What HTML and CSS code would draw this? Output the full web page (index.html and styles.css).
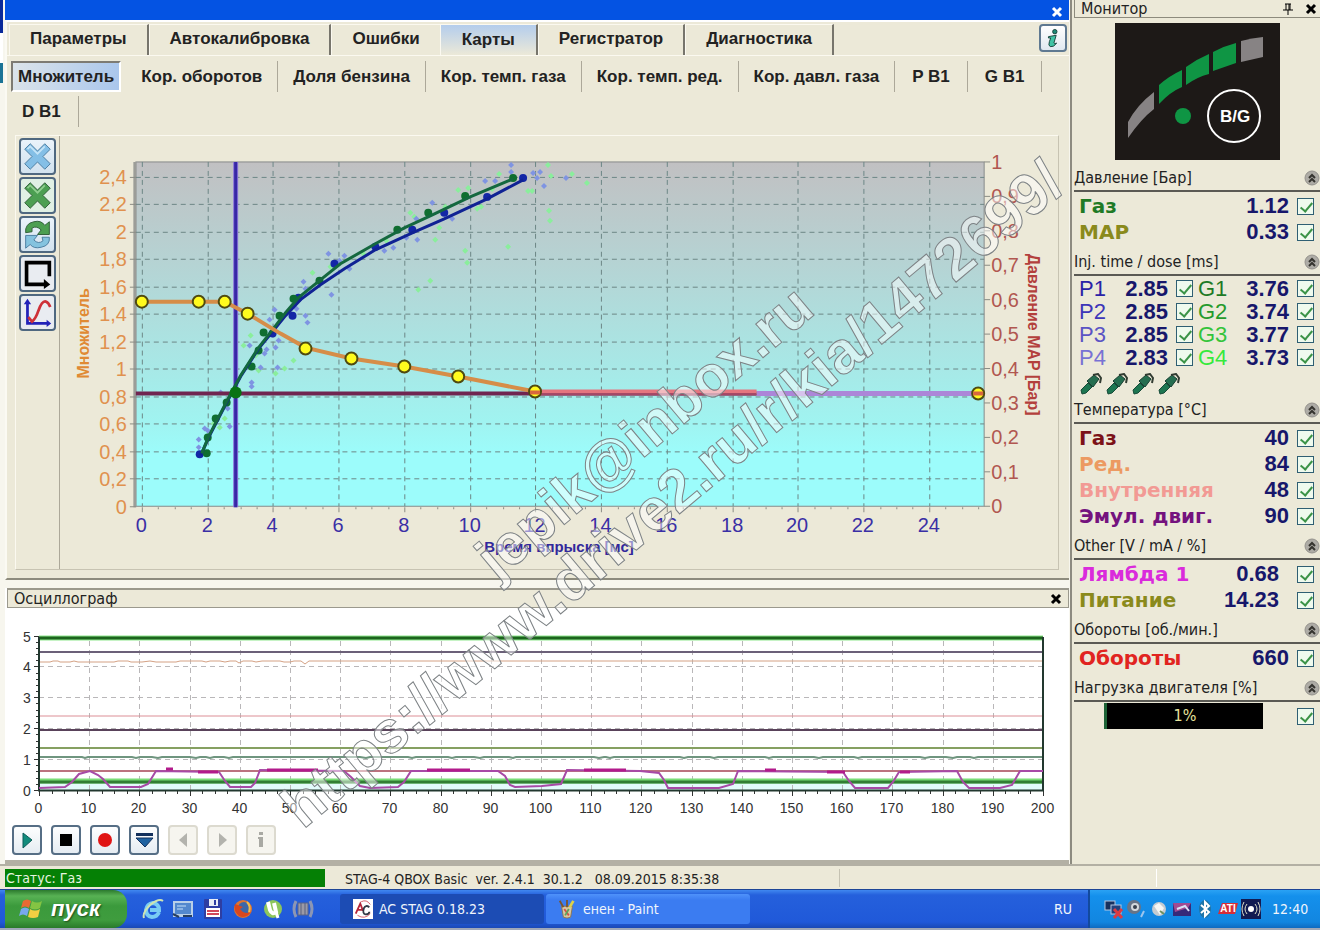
FILE: index.html
```html
<!DOCTYPE html>
<html lang="ru">
<head>
<meta charset="utf-8">
<title>AC STAG 0.18.23</title>
<link rel="stylesheet" href="styles.css">
</head>
<body>
<div class="screen">
  <div class="workspace">
    <main class="left">
      <div class="titlebar"><button class="close close-light" aria-label="Закрыть"><svg viewBox="0 0 12 12"><path d="M2 2L10 10M10 2L2 10"/></svg></button></div>
      <section class="page">
        <nav class="tabs">
          <button class="tab">Параметры</button>
          <button class="tab">Автокалибровка</button>
          <button class="tab tab-last">Ошибки</button>
          <button class="tab tab-active">Карты</button>
          <button class="tab">Регистратор</button>
          <button class="tab">Диагностика</button>
          <button class="info" aria-label="Информация"><svg viewBox="0 0 20 22"><circle cx="12" cy="4" r="2.4" fill="#1d8a76" stroke="#143c36"/><path d="M5 9.500L13.500 8L11 16.500Q11.500 18 14 16.500Q11 21.500 7 20.500Q4.500 19.500 6 15L7.500 11L5 11Z" fill="#3fc3a5" stroke="#143c36"/></svg></button>
        </nav>
        <nav class="subtabs">
          <button class="subtab subtab-active">Множитель</button>
          <button class="subtab">Кор. оборотов</button>
          <button class="subtab">Доля бензина</button>
          <button class="subtab">Кор. темп. газа</button>
          <button class="subtab">Кор. темп. ред.</button>
          <button class="subtab">Кор. давл. газа</button>
          <button class="subtab subtab-short">P B1</button>
          <button class="subtab subtab-short">G B1</button>
          <button class="subtab subtab-wrapped">D B1</button>
        </nav>
        <div class="map">
          <div class="tools">
            <button class="tool" aria-label="Очистить бензин"><svg viewBox="0 0 34 34"><path d="M3 9L9 3L17 11L25 3L31 9L23 17L31 25L25 31L17 23L9 31L3 25L11 17Z" fill="#84bfe6" stroke="#46799c"/><path d="M6 9L9 6L17 14L25 6" fill="none" stroke="#c4e4f7" stroke-width="2"/></svg></button>
            <button class="tool tool-green" aria-label="Очистить газ"><svg viewBox="0 0 34 34"><path d="M3 9L9 3L17 11L25 3L31 9L23 17L31 25L25 31L17 23L9 31L3 25L11 17Z" fill="#4c9f52" stroke="#2c5a35"/><path d="M6 9L9 6L17 14L25 6" fill="none" stroke="#8fce8f" stroke-width="2"/></svg></button>
            <button class="tool" aria-label="Обновить"><svg viewBox="0 0 34 34"><path d="M4 15Q3 5 13 3Q21 1 25 7L30 3V17H17L21 12Q16 7 11 10L11 14Z" fill="#4c9f52" stroke="#2c5a35"/><path d="M30 20Q31 29 21 31Q13 33 9 28L4 32V18H17L13 23Q18 28 23 24L22 20Z" fill="#84c3df" stroke="#46799c"/></svg></button>
            <button class="tool tool-plain" aria-label="Контур"><svg viewBox="0 0 34 34"><path d="M30 20V5H5V29H27" fill="none" stroke="#000" stroke-width="4"/><path d="M24 23L31 29L24 34Z"/></svg></button>
            <button class="tool tool-plain" aria-label="Кривая"><svg viewBox="0 0 34 34"><path d="M6 6V29H29" fill="none" stroke="#2222b8" stroke-width="3"/><path d="M2 8L6 2L10 8ZM27 25L32 29L27 33Z" fill="#2222b8"/><path d="M7 22L11 27Q15 24 18 15Q22 4 26 5Q29 6 31 11" fill="none" stroke="#ce3038" stroke-width="3"/></svg></button>
          </div>
          <svg id="map-chart" class="chart" viewBox="59 135 1000 434" role="img" aria-label="Карта множителя">
            <defs><linearGradient id="sky" x1="0" y1="0" x2="0" y2="1"><stop offset="0" stop-color="#c1c0c2"/><stop offset=".35" stop-color="#b3d7d7"/><stop offset=".75" stop-color="#a0f3f0"/><stop offset=".85" stop-color="#9cfcfb"/><stop offset="1" stop-color="#9cfcfb"/></linearGradient></defs>
            <rect x="135" y="161" width="850" height="345" fill="url(#sky)" stroke="#868a8a"/>
            <path d="M134 161V507" stroke="#9c9d98" stroke-width="3"/>
            <g id="map-grid"></g>
            <path d="M235 161V507" stroke="#8a72d8" stroke-width="5"/>
            <path d="M235 161V507" stroke="#3728a6" stroke-width="3"/>
            <g id="map-dots"></g>
            <path d="M135 393H757" stroke="#702550" stroke-width="4"/>
            <path d="M757 393H985" stroke="#ac86d8" stroke-width="5"/>
            <path class="line" d="M200 455L208 437L226 402L240 376L258 348L272 331L285 315L300 299L320 284L344 268L375 249L412 232L444 218L487 198L523 179" stroke="#102294"/>
            <path class="line" d="M201 453L208 436L226 401L240 375L258 347L272 329L285 312L298 297L319 280L340 263L375 243L404 227L430 215L470 196L513 178" stroke="#14683f"/>
            <path d="M141 301H224L247 313L280 333L305 347L351 358L404 366L458 376L535 391" fill="none" stroke="#d68d48" stroke-width="4"/>
            <path d="M535 391H757" stroke="#e5757f" stroke-width="4"/>
            <path d="M535 394H757" stroke="#a34766" stroke-width="2"/>
            <g id="map-knots"></g>
            <circle cx="235" cy="392" r="6" fill="#087314"/>
            <text class="axis-title left-title" transform="translate(88 378) rotate(-90)">Множитель</text>
            <text class="axis-title right-title" transform="translate(1029 253) rotate(90)">Давление MAP [Бар]</text>
            <text class="bottom-title" x="559" y="552">Время впрыска [мс]</text>
          </svg>
        </div>
      </section>
      <section class="scope">
        <header class="scope-head"><span>Осциллограф</span><button class="close" aria-label="Закрыть осциллограф"><svg viewBox="0 0 12 12"><path d="M2 2L10 10M10 2L2 10"/></svg></button></header>
        <div class="scope-body">
          <svg id="scope-chart" class="chart" viewBox="7 608 1062 212" role="img" aria-label="Осциллограф">
            <rect x="39" y="783" width="1004" height="7" fill="#e3fbfb"/>
            <g id="scope-grid"></g>
            <path d="M39 638H1043" stroke="#8ee78c" stroke-width="5"/>
            <path d="M39 638H1043" stroke="#1d641d" stroke-width="3"/>
            <path d="M39 652H1043" stroke="#6b6078" stroke-width="2"/>
            <path class="thin" d="M39 662H50L53 661H58L60 662H70L74 661L78 662H114L118 661H128L131 662H142L150 661L156 662H176L180 661H202L206 662L210 661H220L225 662L230 661H236L239 663L243 661H252L256 662L262 661H280L284 662H290L294 661H301L305 664L309 661H1043" stroke="#d4a184"/>
            <path class="thin" d="M39 716H1043" stroke="#dc8f96"/>
            <path d="M39 730H1043" stroke="#59425a" stroke-width="2"/>
            <path d="M39 748H1043" stroke="#86a061" stroke-width="2"/>
            <path d="M39 757H82L85 758L88 757H132L136 758L140 757H152L158 758L162 757H190L196 758L200 757H206L210 758L214 757H224L229 758L233 757H360L366 758L370 757H408L412 758L416 757H448L452 758L456 757H474L480 758L484 757H509L513 758L516 757H594L599 758L604 757H606L610 758L614 757H680L684 758L688 757H710L714 758L718 757H765L769 758L773 757H814L819 758L823 757H854L858 758L862 757H920L925 758L930 757H946L953 758L957 757H970L974 758L978 757H1043" fill="none" stroke="#6f957f" stroke-width="2"/>
            <path d="M39 771H1043" stroke="#bb737f" stroke-width="2"/>
            <path d="M39 781H1043" stroke="#79dc76" stroke-width="5"/>
            <path d="M39 782H1043" stroke="#327e34" stroke-width="3"/>
            <path d="M39 637V790.500H1043V637" fill="none" stroke="#22382f" stroke-width="2"/>
            <path d="M39 788L65 787L72 782L79 774L90 771L98 775L103 779L110 787H141L148 784L156 771L219 772L225 781L230 787H251L255 783L260 770L344 771L351 777L360 786L370 788L398 787L404 782L411 771H498L505 776L510 785L515 787L542 786L561 784L567 770L640 771L659 773L664 780L668 788H719L733 784L738 771L843 772L849 781L855 788H888L893 782L899 772L957 771L963 782L969 788H1000L1012 785L1020 771H1043" fill="none" stroke="#a74aa6" stroke-width="2"/>
            <path d="M267 770H318M427 770H470M584 770H626M166 769H173M198 772H218M765 770H776M827 772H845M900 772H910" stroke="#b21b8b" stroke-width="3"/>
          </svg>
          <div class="player">
            <button class="pbtn" aria-label="Пуск"><svg viewBox="0 0 26 26"><path d="M9 6L18 13L9 21Z" fill="#128c7c" stroke="#0d5d5a"/></svg></button>
            <button class="pbtn" aria-label="Стоп"><svg viewBox="0 0 26 26"><path d="M7 7H19V19H7Z"/></svg></button>
            <button class="pbtn" aria-label="Запись"><svg viewBox="0 0 26 26"><circle cx="13" cy="13" r="7" fill="#e01414"/></svg></button>
            <button class="pbtn" aria-label="Сохранить"><svg viewBox="0 0 26 26"><path d="M5 6H22V9H5Z" fill="#12305c"/><path d="M5 11H22L14 20Z" fill="#1f62a0" stroke="#12305c"/></svg></button>
            <button class="pbtn" disabled aria-label="Назад"><svg viewBox="0 0 26 26"><path d="M17 6V20L9 13Z" fill="#b3b3ad"/></svg></button>
            <button class="pbtn" disabled aria-label="Вперёд"><svg viewBox="0 0 26 26"><path d="M10 6V20L18 13Z" fill="#b3b3ad"/></svg></button>
            <button class="pbtn" disabled aria-label="Сведения"><svg viewBox="0 0 26 26"><path d="M11 5H15V8H11ZM10 10H15V20H11V12H10Z" fill="#a9a9a3"/></svg></button>
          </div>
        </div>
      </section>
    </main>

    <aside class="monitor">
      <header class="mon-head"><span class="mon-title">Монитор</span>
        <button class="close" aria-label="Закрепить"><svg viewBox="0 0 12 12"><path d="M3 1H9M4 1V7M8 1V7M7 1V7M1 7H11M6 7V12" stroke-width="1"/></svg></button>
        <button class="close" aria-label="Закрыть монитор"><svg viewBox="0 0 12 12"><path d="M2 2L10 10M10 2L2 10"/></svg></button>
      </header>
      <svg class="gauge" viewBox="0 0 165 137" role="img" aria-label="Переключатель B/G">
        <rect width="165" height="137" fill="#1d1917"/>
        <path d="M13 99Q22 82 39 69V86Q26 96 13 115Z" fill="#878384"/>
        <path d="M44 62Q54 53 67 47V64Q55 69 44 81Z" fill="#0f9544"/>
        <path d="M71 44Q82 36 94 31V51Q82 54 71 62Z" fill="#0f9544"/>
        <path d="M98 29Q109 23 121 20V40L98 48Z" fill="#0f9544"/>
        <path d="M126 18Q137 15 148 14V34L126 39Z" fill="#878384"/>
        <circle cx="68" cy="93" r="8" fill="#0f9544"/>
        <circle cx="119" cy="93" r="26" fill="none" stroke="#fff" stroke-width="2"/>
        <text class="gauge-text" x="120" y="99">B/G</text>
      </svg>

      <section class="group">
        <h2>Давление [Бар]<button class="fold" aria-label="Свернуть"><svg viewBox="0 0 16 16"><use href="#fold"/></svg></button></h2>
        <label class="row"><span class="name c-green">Газ</span><span class="val">1.12</span><input type="checkbox" checked></label>
        <label class="row"><span class="name c-olive">MAP</span><span class="val">0.33</span><input type="checkbox" checked></label>
      </section>
      <section class="group group-tight">
        <h2>Inj. time / dose [ms]<button class="fold" aria-label="Свернуть"><svg viewBox="0 0 16 16"><use href="#fold"/></svg></button></h2>
        <div class="pair"><label class="row"><span class="name thin-name c-p1">P1</span><span class="val">2.85</span><input type="checkbox" checked></label><label class="row"><span class="name thin-name c-g1">G1</span><span class="val">3.76</span><input type="checkbox" checked></label></div>
        <div class="pair"><label class="row"><span class="name thin-name c-p2">P2</span><span class="val">2.85</span><input type="checkbox" checked></label><label class="row"><span class="name thin-name c-g2">G2</span><span class="val">3.74</span><input type="checkbox" checked></label></div>
        <div class="pair"><label class="row"><span class="name thin-name c-p3">P3</span><span class="val">2.85</span><input type="checkbox" checked></label><label class="row"><span class="name thin-name c-g3">G3</span><span class="val">3.77</span><input type="checkbox" checked></label></div>
        <div class="pair"><label class="row"><span class="name thin-name c-p4">P4</span><span class="val">2.83</span><input type="checkbox" checked></label><label class="row"><span class="name thin-name c-g4">G4</span><span class="val">3.73</span><input type="checkbox" checked></label></div>
        <div class="injectors">
          <svg viewBox="0 0 22 22"><use href="#injector"/></svg><svg viewBox="0 0 22 22"><use href="#injector"/></svg><svg viewBox="0 0 22 22"><use href="#injector"/></svg><svg viewBox="0 0 22 22"><use href="#injector"/></svg>
        </div>
      </section>
      <section class="group">
        <h2>Температура [°C]<button class="fold" aria-label="Свернуть"><svg viewBox="0 0 16 16"><use href="#fold"/></svg></button></h2>
        <label class="row"><span class="name c-maroon">Газ</span><span class="val">40</span><input type="checkbox" checked></label>
        <label class="row"><span class="name c-orange">Ред.</span><span class="val">84</span><input type="checkbox" checked></label>
        <label class="row"><span class="name c-pink">Внутренняя</span><span class="val">48</span><input type="checkbox" checked></label>
        <label class="row"><span class="name c-purple">Эмул. двиг.</span><span class="val">90</span><input type="checkbox" checked></label>
      </section>
      <section class="group">
        <h2>Other [V / mA / %]<button class="fold" aria-label="Свернуть"><svg viewBox="0 0 16 16"><use href="#fold"/></svg></button></h2>
        <label class="row row-wide"><span class="name c-magenta">Лямбда 1</span><span class="val">0.68</span><input type="checkbox" checked></label>
        <label class="row row-wide"><span class="name c-olive">Питание</span><span class="val">14.23</span><input type="checkbox" checked></label>
      </section>
      <section class="group">
        <h2>Обороты [об./мин.]<button class="fold" aria-label="Свернуть"><svg viewBox="0 0 16 16"><use href="#fold"/></svg></button></h2>
        <label class="row"><span class="name c-red">Обороты</span><span class="val">660</span><input type="checkbox" checked></label>
      </section>
      <section class="group">
        <h2>Нагрузка двигателя [%]<button class="fold" aria-label="Свернуть"><svg viewBox="0 0 16 16"><use href="#fold"/></svg></button></h2>
        <label class="row"><span class="load">1%</span><input type="checkbox" checked></label>
      </section>
    </aside>
  </div>

  <footer class="status">
    <span class="status-mode">Статус: Газ</span>
    <span class="status-version">STAG-4 QBOX Basic&nbsp; ver. 2.4.1&nbsp; 30.1.2&nbsp;&nbsp; 08.09.2015 8:35:38</span>
    <span class="status-cell"></span><span class="status-rest"></span>
  </footer>

  <div class="taskbar">
    <button class="start"><svg viewBox="0 0 24 24"><path d="M4 4Q8 1 12 4L10 11Q6 8 2 11Z" fill="#e96a35"/><path d="M13 4Q18 7 23 4L21 11Q16 14 11 11Z" fill="#84c443"/><path d="M2 12Q6 9 10 12L8 19Q4 16 0 19Z" fill="#78a8ee"/><path d="M11 12Q16 15 21 12L19 20Q14 22 9 20Z" fill="#f2cf43"/></svg>пуск</button>
    <div class="quick">
      <svg viewBox="0 0 22 22"><path d="M17 14Q15 19 10 19Q4 18 4 12Q5 6 11 5Q17 6 17 12H8" fill="none" stroke="#79ccf4" stroke-width="4"/><path d="M2 20Q0 15 8 7Q17 0 21 3" fill="none" stroke="#cfe3b2" stroke-width="2"/></svg>
      <svg viewBox="0 0 22 22"><rect x="1" y="3" width="20" height="16" fill="#b9cfe8"/><rect x="3" y="5" width="16" height="11" fill="#5388ce"/><path d="M5 8H14M5 11H11" stroke="#c5e0fa"/><path d="M1 16L7 19M11 18H20" stroke="#263e60" stroke-width="2"/></svg>
      <svg viewBox="0 0 22 22"><rect x="2" y="1" width="18" height="20" rx="1" fill="#2e3ea2"/><rect x="7" y="1" width="9" height="7" fill="#e9eef6"/><rect x="12" y="2" width="2" height="5" fill="#2e3ea2"/><rect x="4" y="10" width="14" height="9" fill="#fff"/><path d="M5 13H17M5 16H17" stroke="#d2475a" stroke-width="2"/></svg>
      <svg viewBox="0 0 22 22"><circle cx="11" cy="11" r="9" fill="#df7430"/><circle cx="12" cy="10" r="6" fill="#3d67a8"/><path d="M3 6Q1 13 7 18Q14 21 19 14Q15 16 11 14L8 11L11 9Z" fill="#d9471e"/><path d="M15 4Q19 8 17 14" fill="none" stroke="#f4be4b" stroke-width="2"/></svg>
      <svg viewBox="0 0 22 22"><circle cx="11" cy="11" r="9" fill="#8dc65c"/><path d="M6 4L8 12Q10 17 14 14L12 5" fill="none" stroke="#fff" stroke-width="4"/><path d="M14 14L16 20" stroke="#fff" stroke-width="3"/></svg>
      <svg viewBox="0 0 22 22"><path d="M4 3Q0 11 4 19M18 3Q22 11 18 19" fill="none" stroke="#8c96b4" stroke-width="3"/><rect x="6" y="5" width="10" height="12" fill="#9b9aa6" stroke="#59658b"/><path d="M9 5V17M13 5V17" stroke="#58617e"/></svg>
    </div>
    <button class="task task-active"><svg viewBox="0 0 22 22"><rect width="22" height="22" fill="#fff"/><path d="M3 16L8 5L11 13M5 12H11" fill="none" stroke="#b3263a" stroke-width="2"/><path d="M18 9Q14 6 12 10Q10 16 14 17Q18 17 18 14" fill="none" stroke="#323946" stroke-width="2"/><path d="M5 18Q13 23 19 16M9 3Q15 0 19 6" fill="none" stroke="#d45361"/></svg>AC STAG 0.18.23</button>
    <button class="task"><svg viewBox="0 0 22 22"><path d="M5 8H17L15 20Q11 22 7 20Z" fill="#d9c8a0" stroke="#8a7250"/><path d="M7 9L3 2M11 9V1" stroke="#7c552e" stroke-width="2"/><path d="M14 9L18 2" stroke="#ded147" stroke-width="3"/><path d="M8 11L13 18" stroke="#d5504a" stroke-width="2"/><path d="M13 11L9 18" stroke="#5da35c" stroke-width="2"/></svg>енен - Paint</button>
    <span class="lang">RU</span>
    <div class="tray">
      <svg viewBox="0 0 20 20"><rect x="2" y="2" width="10" height="9" fill="#17305e" stroke="#b5c6df"/><rect x="8" y="6" width="10" height="9" fill="#25417b" stroke="#b5c6df"/><path d="M11 10L19 19M19 10L11 19" stroke="#dc3b43" stroke-width="3"/></svg>
      <svg viewBox="0 0 20 20"><circle cx="8" cy="8" r="7" fill="#677487"/><circle cx="9" cy="8" r="4" fill="#d5d9dc"/><circle cx="9" cy="8" r="2" fill="#38404c"/><path d="M15 18L18 12" stroke="#9ec6ee" stroke-width="2"/></svg>
      <svg viewBox="0 0 20 20"><circle cx="10" cy="10" r="7" fill="#c4cbd1"/><path d="M5 7L10 4L15 9L11 16Z" fill="#f5f6f4"/><path d="M11 12L15 15" stroke="#6d9160" stroke-width="2"/></svg>
      <svg viewBox="0 0 20 20"><rect x="1" y="4" width="18" height="13" fill="#362a79"/><path d="M1 4H19L16 9L3 13Z" fill="#a04b92"/><path d="M5 10L13 7L17 12" stroke="#dae1f6" stroke-width="2" fill="none"/></svg>
      <svg viewBox="0 0 20 20"><ellipse cx="10" cy="10" rx="6" ry="9" fill="#1f75a7"/><path d="M6 6L14 13L10 17V3L14 7L6 14" fill="none" stroke="#fff" stroke-width="2"/></svg>
      <svg viewBox="0 0 20 20"><path d="M4 4H20L17 15H0Z" fill="#d72d37"/><text class="ati" x="10" y="13">ATI</text></svg>
      <svg viewBox="0 0 20 20"><rect width="20" height="20" fill="#111a52"/><circle cx="10" cy="10" r="3" fill="#fff"/><path d="M6 5Q2 10 6 15M14 5Q18 10 14 15M3 3Q-1 10 3 17M17 3Q21 10 17 17" fill="none" stroke="#dfe0c8" stroke-width="1"/></svg>
      <time class="clock">12:40</time>
    </div>
  </div>

  <svg class="watermark" viewBox="0 0 1320 930">
    <text transform="translate(497 581) rotate(-40)">jepik@inbox.ru</text>
    <text class="url" transform="translate(303 830) rotate(-40)">https://www.drive2.ru/r/kia/1472699/</text>
  </svg>
</div>

<svg class="defs" aria-hidden="true"><defs>
  <g id="injector"><path d="M2 21L1 17L8 10L12 14L6 20Z" fill="#1d7651" stroke="#174b39"/><path d="M7 8L14 2L19 6L13 14Z" fill="#256e50" stroke="#173f31"/><path d="M13 2L18 1L21 5L20 10" fill="none" stroke="#323c32" stroke-width="2"/></g>
  <g id="fold"><circle cx="8" cy="8" r="7" fill="#aeaca6" stroke="#94928c"/><path d="M5 8L8 5L11 8M5 12L8 9L11 12" fill="none" stroke="#35342f" stroke-width="2"/></g>
</defs></svg>
<script src="charts.js"></script>
</body>
</html>
```

FILE: styles.css
```css
* { box-sizing: border-box; }

body {
  margin: 0;
  background: #ece9d8;
  color: #222;
  font-family: "DejaVu Sans Condensed", "Noto Sans", sans-serif;
  font-size: 14px;
}

button {
  margin: 0;
  padding: 0;
  border: 0;
  background: none;
  color: inherit;
  font: inherit;
}

svg { display: block; }

.defs { position: absolute; width: 0; height: 0; }

.screen {
  position: relative;
  display: flex;
  flex-direction: column;
  min-height: 100vh;
  overflow: hidden;
}

.workspace {
  display: grid;
  grid-template-columns: minmax(0, 1fr) 248px;
  flex: 1;
}

/* Left side */
.left {
  display: flex;
  flex-direction: column;
  padding-left: 5px;
  padding-right: 1px;
  border-right: 2px solid #8d8b80;
  background: linear-gradient(#0a2a9a 0 33px, #fff 33px 63px, #1b7396 63px 83px, #f7f6ee 83px) no-repeat 0 0 / 3px 100%, #f7f6ee;
}

.titlebar {
  display: flex;
  align-items: center;
  justify-content: flex-end;
  height: 20px;
  padding: 4px 6px 0;
  background: #0453e3;
}

.close { width: 12px; height: 12px; }
.close svg { width: 12px; height: 12px; fill: none; stroke: #000; stroke-width: 3; }
.close-light svg { stroke: #fff; }

.page {
  padding: 2px 0 8px;
  border-top: 2px solid #fff;
  border-bottom: 2px solid #8d8b7d;
  border-left: 2px solid #fbfaf3;
  background: #ece9d8;
}

.tabs {
  display: flex;
  height: 32px;
  margin-bottom: 5px;
  padding-left: 2px;
  border-bottom: 1px solid #fbf9f0;
  font: bold 17px "Liberation Sans", sans-serif;
}

.tab {
  padding: 0 20px 3px;
  border-top: 1px solid #fbf9f0;
  border-left: 1px solid #fbf9f0;
  border-right: 2px solid #77756c;
}

.tab-last { border-right: 0; }

.tab-active { padding: 0 21px; background: linear-gradient(#b4cdec, #ece9d8); }

.info {
  width: 28px;
  height: 28px;
  margin-left: auto;
  margin-right: 2px;
  padding: 2px;
  border: 2px solid #5f7991;
  border-radius: 4px;
  background: linear-gradient(#fff, #e0e8f0);
}

.info svg { width: 20px; height: 20px; }

.subtabs {
  display: flex;
  flex-wrap: wrap;
  gap: 4px 0;
  padding: 0 10px 0 4px;
  font: bold 17px "Liberation Sans", sans-serif;
}

.subtab {
  height: 31px;
  padding: 0 15px;
  border-right: 1px solid #aca899;
}

.subtab-short { padding: 0 17px; }
.subtab-wrapped { padding: 0 17px 0 11px; }

.subtab-active {
  margin-right: 5px;
  padding: 0 5px;
  border: 2px solid #fff;
  border-top-color: #7d7b73;
  border-left-color: #7d7b73;
  background: linear-gradient(100deg, #dce4ea, #a9c6ec);
}

.map {
  display: grid;
  grid-template-columns: 44px minmax(0, 1fr);
  margin: 8px 10px 0 8px;
  border: 1px solid #c7c3b2;
  border-top-color: #fbf9f0;
  border-left-color: #fbf9f0;
}

.tools {
  display: flex;
  flex-direction: column;
  gap: 2px;
  padding: 2px 3px;
  border-right: 1px solid #aca899;
}

.tool {
  width: 37px;
  height: 37px;
  padding: 1px;
  border: 2px solid #4f6880;
  border-radius: 4px;
  background: linear-gradient(#eaf3fa, #d2e2ef);
}

.tool-green { background: #e0f0e4; }
.tool-plain { background: #e9ecf1; }
.tool svg { width: 31px; height: 31px; }

.chart { width: 100%; height: auto; }

.line { fill: none; stroke-width: 3; }
.thin { fill: none; stroke-width: 1; }

.chart text { font-family: "Liberation Sans", sans-serif; }
.tick-left, .tick-right, .tick-bottom { font-size: 20px; }
.tick-left { fill: #e0914e; text-anchor: end; }
.tick-right { fill: #b15750; }
.tick-bottom { fill: #3a2fa5; text-anchor: middle; }
.tick-scope { fill: #333; font-size: 14px; text-anchor: middle; }

.axis-title { font-size: 16px; font-weight: bold; }
.left-title { fill: #e08a34; }
.right-title { fill: #b3403c; }
.bottom-title { fill: #32289c; font-size: 15px; font-weight: bold; text-anchor: middle; }

.grid-line { stroke: #6c8786; stroke-dasharray: 5 4; fill: none; }
.grid-soft { stroke: #b9b7b9; stroke-dasharray: 5 4; fill: none; }
.tick-line { stroke: #8b8c84; fill: none; }
.tick-dark { stroke: #333; fill: none; }
.knot { fill: #fffb1e; stroke: #4f4a10; stroke-width: 2; }

/* Oscilloscope */
.scope { display: flex; flex-direction: column; flex: 1; margin-top: 8px; padding-left: 2px; background: #fff; border-bottom: 4px solid #b3b0a4; }

.scope-head {
  display: flex;
  align-items: center;
  justify-content: space-between;
  height: 20px;
  padding: 0 6px;
  border: 1px solid #9b998d;
  border-top-width: 2px;
  background: #ece9d8;
  font-size: 16px;
  line-height: 16px;
}

.player { display: flex; gap: 9px; padding: 5px 0 5px 5px; }

.pbtn {
  width: 30px;
  height: 30px;
  border: 2px solid #566e85;
  border-radius: 4px;
  background: linear-gradient(#fdfefe, #e5ecf2);
}

.pbtn:disabled { border: 2px solid #dcdacf; background: #f6f5ef; }
.pbtn svg { width: 26px; height: 26px; }

/* Monitor */
.monitor { padding-left: 2px; overflow: hidden; }

.mon-head {
  display: flex;
  align-items: center;
  gap: 11px;
  height: 18px;
  padding: 0 3px 0 6px;
  border-bottom: 1px solid #8d8b7d;
  border-left: 1px solid #8d8b7d;
  font-size: 16px;
  line-height: 16px;
}

.mon-title { flex: 1; }

.gauge { width: 165px; height: 137px; margin: 5px 0 5px 41px; }
.gauge-text { fill: #fff; font: bold 17px "Liberation Sans", sans-serif; text-anchor: middle; }

.group { padding-bottom: 4px; }
.group-tight { padding-bottom: 0; }

.group h2 {
  display: flex;
  align-items: center;
  justify-content: space-between;
  height: 27px;
  margin: 0 0 1px;
  border-bottom: 2px solid #5b5a54;
  font-size: 16px;
  font-weight: normal;
}

.fold svg { width: 16px; height: 16px; }

.row {
  display: flex;
  align-items: center;
  height: 26px;
  padding: 0 6px 0 5px;
  font: bold 22px "Liberation Sans", sans-serif;
}

.name { flex: 1; font: bold 20px "DejaVu Sans", sans-serif; }
.thin-name { font: 22px "Liberation Sans", sans-serif; }
.val { margin-right: 8px; color: #17176b; }
.row-wide .val { margin-right: 18px; }

.row input {
  position: relative;
  width: 17px;
  height: 17px;
  margin: 0;
  appearance: none;
  border: 1px solid #2f5f73;
  background: #effaee;
}

.row input:checked::before {
  content: "";
  position: absolute;
  left: 5px;
  top: 1px;
  width: 5px;
  height: 10px;
  border: solid #3b9347;
  border-width: 0 2px 2px 0;
  transform: rotate(40deg);
}

.pair { display: grid; grid-template-columns: 119px 1fr; }
.pair .row { height: 23px; }
.pair .row:first-child { padding-right: 0; }

.injectors { display: flex; gap: 4px; height: 28px; padding: 4px 0 0 6px; }
.injectors svg { width: 22px; height: 22px; }

.load {
  flex: 1;
  height: 26px;
  margin: 0 34px 0 25px;
  border-left: 3px solid #1d6336;
  background: #000;
  color: #e6e49c;
  font: 16px/26px "DejaVu Sans Condensed", "Noto Sans", sans-serif;
  text-align: center;
}

.c-green { color: #1f7a25; }
.c-olive { color: #8a8a1c; }
.c-maroon { color: #7c1218; }
.c-orange { color: #ec9a62; }
.c-pink { color: #f29a94; }
.c-purple { color: #74127e; }
.c-magenta { color: #da2bdc; }
.c-red { color: #e12420; }
.c-p1 { color: #2a22a6; }
.c-p2 { color: #3d35b8; }
.c-p3 { color: #5b54c4; }
.c-p4 { color: #7872d4; }
.c-g1 { color: #1f7a25; }
.c-g2 { color: #259b2c; }
.c-g3 { color: #34c43b; }
.c-g4 { color: #36ea3d; }

/* Status bar */
.status {
  display: flex;
  align-items: stretch;
  height: 25px;
  padding: 3px 0 2px 5px;
  border-top: 2px solid #b3b0a4;
}

.status-mode { width: 320px; padding-left: 1px; background: #058005; color: #e8f5e0; line-height: 18px; }
.status-version { width: 515px; padding-left: 20px; border-right: 1px solid #c5c2b2; line-height: 20px; }
.status-cell { width: 317px; border-right: 1px solid #fff; }
.status-rest { flex: 1; }

/* Taskbar */
.taskbar {
  display: flex;
  align-items: stretch;
  height: 41px;
  padding-left: 5px;
  border-top: 1px solid #1d4596;
  border-bottom: 2px solid #9fa8b8;
  background: linear-gradient(#4088f0, #2560dc 5px, #2059d9 32px, #1a49b5);
  color: #f0f5fc;
}

.start {
  display: flex;
  align-items: center;
  gap: 8px;
  width: 122px;
  padding-left: 14px;
  border-radius: 0 14px 14px 0;
  background: linear-gradient(#2c7a2e, #58b254 6px, #3b9a3c 16px, #3f9c3e 30px, #297a2a);
  color: #fff;
  font: italic bold 22px "Liberation Sans", sans-serif;
  text-shadow: 1px 1px 2px #1b4b1b;
}

.start svg { width: 24px; height: 24px; }

.quick { display: flex; align-items: center; gap: 8px; width: 213px; padding-left: 15px; }
.quick svg { width: 22px; height: 22px; }

.task {
  display: flex;
  align-items: center;
  gap: 6px;
  width: 204px;
  margin: 4px 2px 4px 0;
  padding-left: 11px;
  border-radius: 3px;
  background: linear-gradient(#4f92fa, #3b7cf1 6px);
}

.task-active { padding-left: 13px; background: #1c4cb4; }
.task svg { width: 20px; height: 20px; }

.lang { margin-left: auto; padding-right: 16px; line-height: 39px; }

.tray {
  display: flex;
  align-items: center;
  gap: 3px;
  width: 232px;
  padding-left: 13px;
  border-left: 2px solid #124a9e;
  background: linear-gradient(#2aa2f4, #1490ec 6px, #1286e0 32px, #0f6ac0);
}

.tray svg { width: 20px; height: 20px; }
.clock { margin-left: 8px; }
.ati { fill: #fff; font: bold 10px "Liberation Sans", sans-serif; text-anchor: middle; }

.watermark {
  position: absolute;
  inset: 0;
  width: 100%;
  pointer-events: none;
}

.watermark text {
  fill: #fff;
  fill-opacity: .5;
  stroke: #7d8285;
  stroke-width: 1;
  font: bold 58px "Liberation Sans", sans-serif;
}

.watermark .url { font-size: 59px; }
```

FILE: charts.js
```js
const NS = "http://www.w3.org/2000/svg";

function add(parent, tag, attrs, text) {
  const el = document.createElementNS(NS, tag);
  for (const key in attrs) el.setAttribute(key, attrs[key]);
  if (text !== undefined) el.textContent = text;
  parent.appendChild(el);
}

const comma = (n) => String(n).replace(".", ",");

/* Multiplier map */
const grid = document.getElementById("map-grid");
const mapX = (v) => Math.round(141 + v * 32.87) + 0.5;
const mapY = (v) => Math.round(506 - v * 137.6) + 0.5;

for (let v = 0; v <= 24; v += 2) {
  add(grid, "path", { class: "grid-line", d: `M${mapX(v)} 161V506` });
  add(grid, "text", { class: "tick-bottom", x: mapX(v) - 1, y: 532 }, v);
}
for (let i = 0; i <= 51; i++) {
  add(grid, "path", { class: "tick-line", d: `M${mapX(i / 2)} 507v${i % 4 ? 2 : 5}` });
}
for (let i = 0; i <= 12; i++) {
  const y = mapY(i / 5);
  if (i) add(grid, "path", { class: "grid-line", d: `M135 ${y}H985` });
  add(grid, "path", { class: "tick-line", d: `M129 ${y}H135` });
  add(grid, "text", { class: "tick-left", x: 126, y: y + 7 }, comma(i / 5));
}
for (let i = 0; i <= 10; i++) {
  const y = 506 - i * 34.5;
  add(grid, "path", { class: "tick-line", d: `M985 ${y}H991` });
  add(grid, "text", { class: "tick-right", x: 992, y: y + 7 }, comma(i / 10));
}

const dots = document.getElementById("map-dots");
const dotSets = [
  { fill: "#8aee9c", r: 3, at: [[499,173],[458,189],[468,187],[410,212],[414,216],[477,208],[481,206],[439,227],[435,239],[508,246],[467,262],[430,280],[418,289],[465,250],[363,253],[312,272],[528,190],[548,164],[551,175],[587,182],[572,173],[549,210],[550,220],[532,190],[250,335],[243,345],[255,355],[275,373],[284,368],[293,360],[258,370],[224,418],[219,427],[213,423],[492,188],[445,206],[386,240],[330,266]] },
  { fill: "#7f94e2", r: 3, at: [[511,164],[511,171],[485,180],[495,180],[533,172],[537,177],[540,171],[544,185],[566,177],[432,202],[416,218],[452,218],[406,237],[417,239],[393,247],[384,250],[328,253],[344,255],[339,260],[349,268],[303,281],[305,288],[331,294],[274,309],[296,308],[305,315],[307,322],[269,319],[278,340],[275,347],[249,345],[264,353],[266,349],[260,367],[277,367],[251,382],[251,386],[220,392],[227,408],[229,426],[204,428],[207,430],[198,439],[198,447]] },
  { fill: "#1326a6", r: 4, at: [[523,177],[487,196],[444,212],[412,229],[375,246],[334,263],[292,315],[298,297],[199,454],[272,333]] },
  { fill: "#0f6e30", r: 4, at: [[513,177],[465,195],[428,212],[397,229],[319,280],[293,298],[279,315],[263,332],[258,350],[251,366],[226,402],[215,418],[207,437],[206,453]] }
];
for (const set of dotSets) {
  for (const [x, y] of set.at) {
    const r = set.r;
    if (r < 4) add(dots, "path", { fill: set.fill, d: `M${x - r} ${y}l${r} ${-r}l${r} ${r}l${-r} ${r}z` });
    else add(dots, "circle", { fill: set.fill, cx: x, cy: y, r });
  }
}

const knots = document.getElementById("map-knots");
for (const [x, y] of [[141,301],[198,301],[224,301],[247,313],[305,348],[351,358],[404,366],[458,376],[535,391],[979,393]]) {
  add(knots, "circle", { class: "knot", cx: x, cy: y, r: 6 });
}
for (const [x, y] of [[535,392],[979,393]]) {
  add(knots, "path", { d: `M${x - 5} ${y}h10`, stroke: "#d8673f", "stroke-width": 4 });
}

/* Oscilloscope */
const scope = document.getElementById("scope-grid");
for (let i = 0; i <= 20; i++) {
  const x = Math.round(39 + i * 50.2) + 0.5;
  if (i && i < 20) add(scope, "path", { class: "grid-soft", d: `M${x} 641V790` });
  add(scope, "path", { class: "tick-dark", d: `M${x} 791v5` });
  add(scope, "text", { class: "tick-scope", x: x - 1, y: 813 }, i * 10);
}
for (let i = 0; i < 80; i++) {
  add(scope, "path", { class: "tick-dark", d: `M${Math.round(39 + i * 12.55) + 0.5} 791v3` });
}
for (let i = 0; i <= 5; i++) {
  const y = Math.round(791 - i * 30.9) - 0.5;
  if (i && i < 5) add(scope, "path", { class: "grid-soft", d: `M39 ${y}H1043` });
  add(scope, "path", { class: "tick-dark", d: `M34 ${y}H39` });
  add(scope, "text", { class: "tick-scope", x: 27, y: y + 5 }, i);
}
for (let i = 0; i < 25; i++) {
  add(scope, "path", { class: "tick-dark", d: `M36 ${Math.round(791 - i * 6.18) - 0.5}H39` });
}
```
